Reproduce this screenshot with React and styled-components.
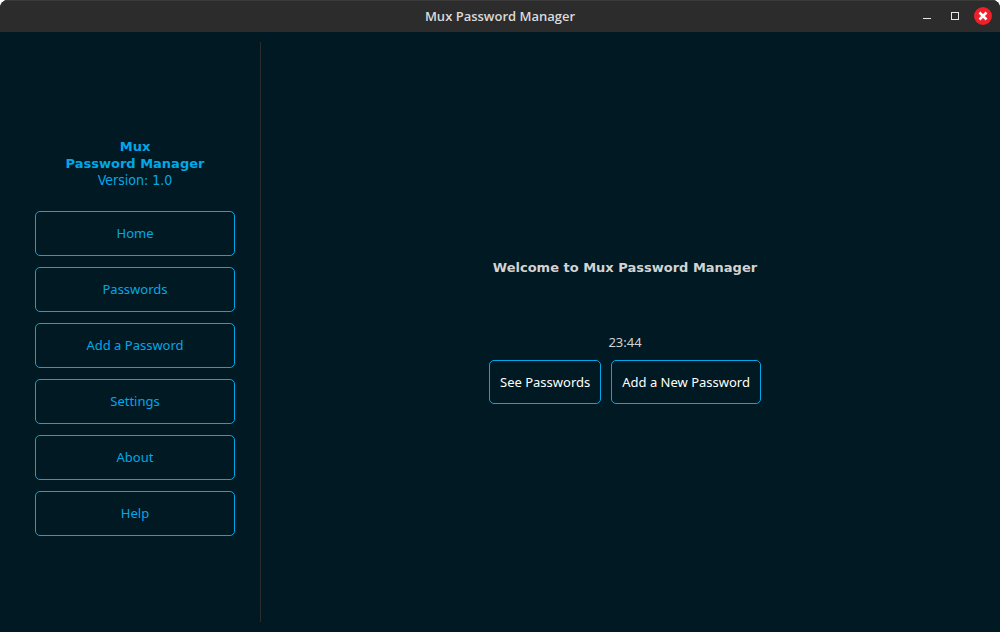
import React from "react";
import styled, { createGlobalStyle } from "styled-components";

const GlobalStyle = createGlobalStyle`
  * { box-sizing: border-box; }
  body { margin: 0; background: #ffffff; }
`;

const Window = styled.div`
  display: flex;
  flex-direction: column;
  min-height: 100vh;
  border-radius: 8px 8px 0 0;
  overflow: hidden;
  background: #001922;
  font-family: "Noto Sans", "Open Sans", sans-serif;
  font-size: 13px;
  line-height: 18px;
`;

const TitleBar = styled.header`
  display: grid;
  grid-template-columns: 1fr auto 1fr;
  align-items: center;
  height: 32px;
  padding: 0 8px 1px;
  background: #2c2c2c;
  border-top: 1px solid #3b3b3b;
`;

const WindowTitle = styled.span`
  grid-column: 2;
  color: #dadada;
  font-family: "Open Sans", "Noto Sans", sans-serif;
  font-size: 13px;
  font-weight: 600;
`;

const WindowControls = styled.div`
  display: flex;
  justify-content: flex-end;
  gap: 10px;
`;

const ControlButton = styled.button`
  display: block;
  width: 18px;
  height: 18px;
  padding: 0;
  border: 0;
  border-radius: 50%;
  background: ${(p) => (p.$close ? "#ee2029" : "transparent")};

  svg { display: block; }
`;

const Body = styled.div`
  display: flex;
  flex: 1;
  padding: 10px;
`;

const Sidebar = styled.aside`
  display: flex;
  flex-direction: column;
  justify-content: center;
  flex: 0 0 251px;
  padding: 10px 25px 0;
  border-right: 1px solid #2c2c2c;
`;

const Brand = styled.div`
  margin-bottom: 22px;
  color: #00a8e8;
  line-height: 17px;
  text-align: center;
`;

const BrandName = styled.h1`
  margin: 0;
  font-family: "DejaVu Sans", sans-serif;
  font-size: 13px;
  font-weight: 700;
`;

const Version = styled.p`
  margin: 0;
  font-family: "DejaVu Sans Condensed", "DejaVu Sans", sans-serif;
  font-size: 14px;
`;

const Nav = styled.nav`
  display: flex;
  flex-direction: column;
  gap: 11px;
`;

const Button = styled.button`
  height: ${(p) => (p.$nav ? "45px" : "44px")};
  padding: ${(p) => (p.$nav ? "0 10px 2px" : "0 10px")};
  border: 1px solid #00a8e8;
  border-radius: 5px;
  background: transparent;
  color: ${(p) => (p.$nav ? "#00a8e8" : "#ffffff")};
  font: inherit;
  white-space: nowrap;
`;

const Main = styled.main`
  display: flex;
  flex: 1;
  flex-direction: column;
  align-items: center;
  justify-content: center;
  padding: 0 1px 2px 0;
`;

const Heading = styled.h2`
  margin: 0 0 57px;
  color: #d3d3d3;
  font-family: "DejaVu Sans", sans-serif;
  font-size: 13px;
  font-weight: 700;
  line-height: 17px;
`;

const Clock = styled.time`
  margin-bottom: 9px;
  color: #d3d3d3;
`;

const Actions = styled.div`
  display: flex;
  gap: 10px;
`;

const pages = ["Home", "Passwords", "Add a Password", "Settings", "About", "Help"];

export default function App() {
  return (
    <>
      <GlobalStyle />
      <Window>
        <TitleBar>
          <WindowTitle>Mux Password Manager</WindowTitle>
          <WindowControls>
            <ControlButton type="button" aria-label="Minimize">
              <svg width="18" height="18">
                <path d="M5 11.5h8" stroke="#e6e6e6" />
              </svg>
            </ControlButton>
            <ControlButton type="button" aria-label="Maximize">
              <svg width="18" height="18">
                <rect x="5.5" y="5.5" width="7" height="7" fill="none" stroke="#e6e6e6" />
              </svg>
            </ControlButton>
            <ControlButton type="button" aria-label="Close" $close>
              <svg width="18" height="18">
                <path d="M5.5 5.5l7 7M12.5 5.5l-7 7" stroke="#ffffff" strokeWidth="2.5" />
              </svg>
            </ControlButton>
          </WindowControls>
        </TitleBar>
        <Body>
          <Sidebar>
            <Brand>
              <BrandName>
                Mux
                <br />
                Password Manager
              </BrandName>
              <Version>Version: 1.0</Version>
            </Brand>
            <Nav>
              {pages.map((page) => (
                <Button key={page} type="button" $nav>
                  {page}
                </Button>
              ))}
            </Nav>
          </Sidebar>
          <Main>
            <Heading>Welcome to Mux Password Manager</Heading>
            <Clock>23:44</Clock>
            <Actions>
              <Button type="button">See Passwords</Button>
              <Button type="button">Add a New Password</Button>
            </Actions>
          </Main>
        </Body>
      </Window>
    </>
  );
}
